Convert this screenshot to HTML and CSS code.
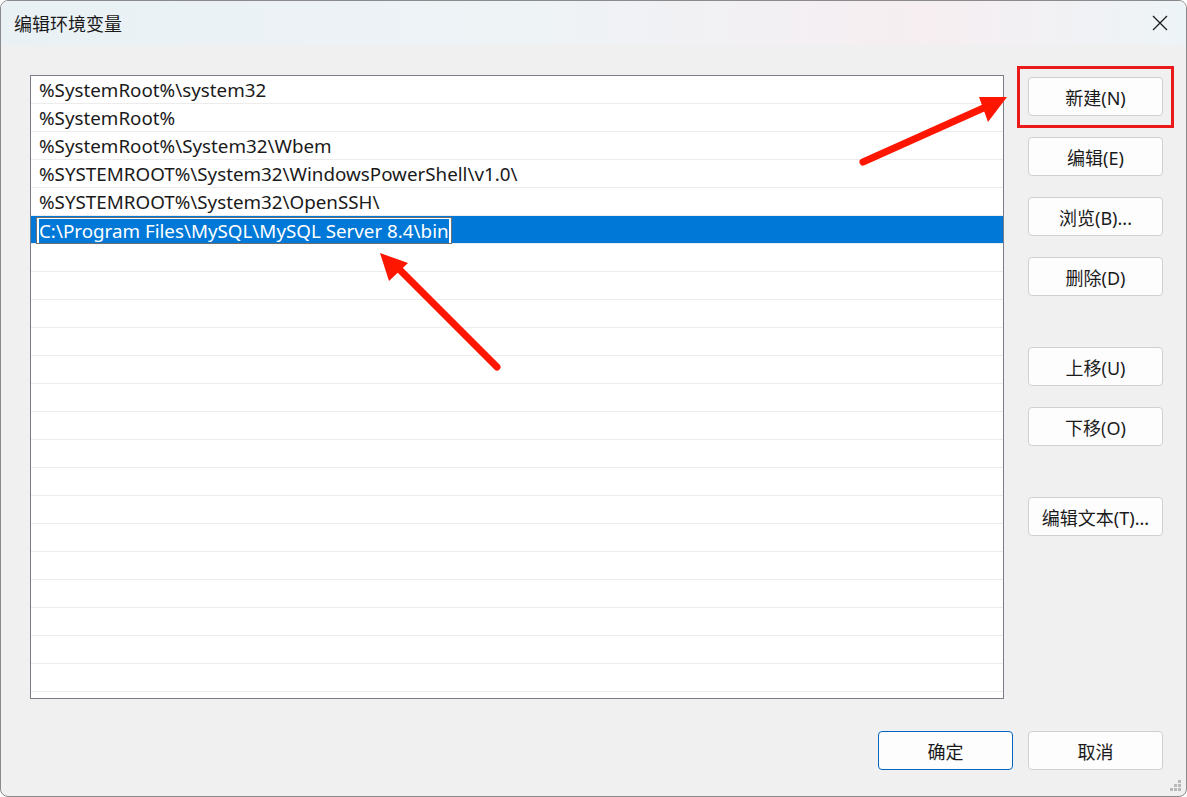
FILE: index.html
```html
<!DOCTYPE html>
<html lang="zh-CN">

<head>
  <meta charset="UTF-8">
  <title>编辑环境变量</title>
  <link rel="stylesheet" href="styles.css">
</head>

<body>
  <div class="window">
    <div class="title-bar">
      <span class="title">编辑环境变量</span>
      <span class="close">
        <svg width="16" height="16" viewBox="0 0 16 16"><path d="M1 1L15 15M15 1L1 15" stroke="#1c1c1c" stroke-width="1.3" fill="none"/></svg>
      </span>
    </div>

    <div class="content">
      <div class="main">
        <ul class="path-list">
          <li class="row">%SystemRoot%\system32</li>
          <li class="row">%SystemRoot%</li>
          <li class="row">%SystemRoot%\System32\Wbem</li>
          <li class="row">%SYSTEMROOT%\System32\WindowsPowerShell\v1.0\</li>
          <li class="row">%SYSTEMROOT%\System32\OpenSSH\</li>
          <li class="row selected"><span class="edit"><span class="sel">C:\Program Files\MySQL\MySQL Server 8.4\bin</span></span></li>
          <li class="row"></li>
          <li class="row"></li>
          <li class="row"></li>
          <li class="row"></li>
          <li class="row"></li>
          <li class="row"></li>
          <li class="row"></li>
          <li class="row"></li>
          <li class="row"></li>
          <li class="row"></li>
          <li class="row"></li>
          <li class="row"></li>
          <li class="row"></li>
          <li class="row"></li>
          <li class="row"></li>
          <li class="row"></li>
        </ul>

        <div class="side">
          <button class="btn">新建(N)</button>
          <button class="btn">编辑(E)</button>
          <button class="btn">浏览(B)...</button>
          <button class="btn">删除(D)</button>
          <button class="btn group">上移(U)</button>
          <button class="btn">下移(O)</button>
          <button class="btn group">编辑文本(T)...</button>
        </div>
      </div>

      <div class="footer">
        <button class="btn primary">确定</button>
        <button class="btn">取消</button>
      </div>
    </div>

    <div class="highlight"></div>

    <svg class="arrows" width="1187" height="797" viewBox="0 0 1187 797">
      <g stroke="#ff1600" stroke-width="7" stroke-linecap="round" fill="none">
        <path d="M863 162L988 106"/>
        <path d="M497 367L396 266"/>
      </g>
      <g fill="#ff1600">
        <path d="M979 97L1007 97L988 122Z"/>
        <path d="M380 253L408 263L389 281Z"/>
      </g>
    </svg>

    <svg class="grip" width="12" height="12" viewBox="0 0 12 12">
      <g fill="#b8b8b8">
        <rect x="8" y="0" width="3" height="3"/>
        <rect x="4" y="4" width="3" height="3"/>
        <rect x="8" y="4" width="3" height="3"/>
        <rect x="0" y="8" width="3" height="3"/>
        <rect x="4" y="8" width="3" height="3"/>
        <rect x="8" y="8" width="3" height="3"/>
      </g>
    </svg>
  </div>
</body>

</html>
```

FILE: styles.css
```css
* {
  box-sizing: border-box;
}

body {
  margin: 0;
  font-family: "Noto Sans", "Noto Sans CJK SC", sans-serif;
  color: #1a1a1a;
  background: #fff;
}

.window {
  position: relative;
  width: 1187px;
  height: 797px;
  border: 1px solid #8a8a8a;
  border-radius: 8px;
  background: #f0f0f0;
  overflow: hidden;
}

.title-bar {
  display: flex;
  align-items: center;
  justify-content: space-between;
  height: 44px;
  padding: 0 18px 0 13px;
  background: linear-gradient(90deg, #e9f1f5 0%, #eef3f6 45%, #f6eef1 78%, #edf4f7 100%);
}

.title {
  font-size: 18px;
  font-family: "Noto Sans CJK SC", sans-serif;
}

.close {
  display: flex;
}

.content {
  padding: 30px 23px 0 29px;
}

.main {
  display: flex;
  gap: 24px;
}

.path-list {
  list-style: none;
  margin: 0;
  padding: 0;
  width: 974px;
  height: 624px;
  border: 1px solid #7c7c88;
  background: #fff;
  overflow: hidden;
}

.row {
  height: 28px;
  line-height: 28px;
  padding-left: 8px;
  border-bottom: 1px solid #ececec;
  font-size: 18.8px;
  white-space: nowrap;
}

.row.selected {
  background: #0078d7;
  padding-left: 5px;
  padding-top: 1px;
  line-height: 24px;
}

.edit {
  display: inline-block;
  height: 27px;
  padding: 1px 2px 0 2px;
  border: 1px solid #6e6e6e;
  background: #fff;
}

.sel {
  display: inline-block;
  background: #0078d7;
  color: #fff;
  line-height: 24px;
}

.side {
  display: flex;
  flex-direction: column;
  padding-top: 2px;
  gap: 21px;
}

.btn {
  width: 135px;
  height: 39px;
  border: 1px solid #d0d0d0;
  border-radius: 4px;
  background: #fdfdfd;
  font-family: "Noto Sans", "Noto Sans CJK SC", sans-serif;
  font-size: 18px;
  color: #1a1a1a;
  padding: 0;
}

.btn.group {
  margin-top: 30px;
}

.footer {
  display: flex;
  justify-content: flex-end;
  gap: 15px;
  margin-top: 32px;
}

.btn.primary {
  border-color: #0067c0;
}

.highlight {
  position: absolute;
  left: 1016px;
  top: 65px;
  width: 157px;
  height: 62px;
  border: 3px solid #ea1a1a;
}

.arrows {
  position: absolute;
  left: -1px;
  top: -1px;
  pointer-events: none;
}

.grip {
  position: absolute;
  right: 4px;
  bottom: 4px;
}
```
